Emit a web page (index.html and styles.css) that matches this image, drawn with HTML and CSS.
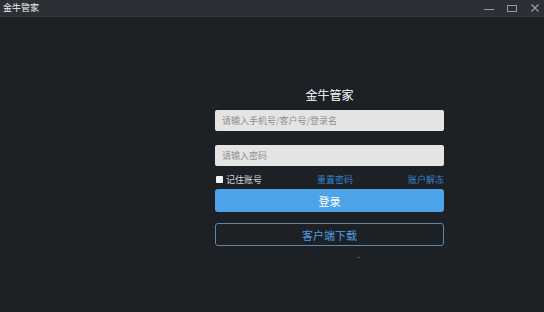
FILE: index.html
```html
<!DOCTYPE html>
<html lang="zh-CN">
<head>
  <meta charset="UTF-8" />
  <title>金牛管家</title>
  <link rel="stylesheet" href="styles.css">
</head>
<body>
  <div class="title-bar">
    <div class="app-name">金牛管家</div>
    <div class="win-btns">
      <svg class="win-btn" width="12" height="12" viewBox="0 0 12 12"><path d="M1 7.5h10" stroke="#9a9ca1" stroke-width="1"/></svg>
      <svg class="win-btn" width="12" height="12" viewBox="0 0 12 12"><rect x="1.5" y="3.5" width="9" height="6" fill="none" stroke="#9a9ca1" stroke-width="1"/></svg>
      <svg class="win-btn" width="12" height="12" viewBox="0 0 12 12"><path d="M2.5 2.5l7 7M9.5 2.5l-7 7" stroke="#9a9ca1" stroke-width="1.2"/></svg>
    </div>
  </div>

  <main>
    <div class="login-box">
      <h1>金牛管家</h1>
      <input class="field" type="text" placeholder="请输入手机号/客户号/登录名">
      <input class="field pwd" type="password" placeholder="请输入密码">
      <div class="options">
        <label class="remember"><span class="check"></span>记住账号</label>
        <a href="#" class="link">重置密码</a>
        <a href="#" class="link">账户解冻</a>
      </div>
      <button class="login-btn">登录</button>
      <button class="download-btn">客户端下载</button>
      <div class="dot"></div>
    </div>
  </main>
</body>
</html>
```

FILE: styles.css
```css
* { box-sizing: border-box; }

body {
  margin: 0;
  width: 544px;
  height: 312px;
  background: #1d2024;
  font-family: "Noto Sans CJK SC", "Noto Sans", sans-serif;
  color: #fff;
  overflow: hidden;
}

.title-bar {
  height: 17px;
  background: #2c2f36;
  border-bottom: 1px solid #34373e;
  display: flex;
  justify-content: space-between;
  align-items: center;
  padding: 0 3px 0 3px;
}

.app-name {
  font-size: 9px;
  line-height: 16px;
  color: #eee;
}

.win-btns {
  display: flex;
  gap: 11px;
}

.win-btn { display: block; }

main {
  padding: 70px 0 0 215px;
}

.login-box {
  width: 229px;
  display: flex;
  flex-direction: column;
}

h1 {
  margin: 0 0 7px;
  font-size: 12px;
  font-weight: normal;
  line-height: 16px;
  text-align: center;
  color: #fff;
}

.field {
  height: 21px;
  border: none;
  border-radius: 2px;
  background: #e4e4e4;
  padding: 0 7px;
  font-family: inherit;
  font-size: 9px;
  color: #333;
  outline: none;
}

.field::placeholder { color: #8f8f8f; }

.pwd { margin-top: 14px; }

.options {
  display: grid;
  grid-template-columns: 102px 1fr auto;
  align-items: center;
  height: 14px;
  margin-top: 6px;
  font-size: 9px;
}

.remember {
  display: flex;
  align-items: center;
  gap: 3px;
  color: #d6d6d6;
  padding-left: 1px;
}

.check {
  width: 7px;
  height: 7px;
  background: #f2f2f2;
  border-radius: 1px;
}

.link {
  color: #3383cc;
  text-decoration: none;
}

.login-btn,
.download-btn {
  height: 23px;
  border-radius: 3px;
  font-family: inherit;
  font-size: 11px;
  cursor: pointer;
}

.login-btn {
  margin-top: 3px;
  background: #4ea4e9;
  border: none;
  color: #fff;
}

.download-btn {
  margin-top: 11px;
  background: transparent;
  border: 1px solid #5e88ab;
  color: #4a9de2;
}

.dot {
  width: 3px;
  height: 1px;
  background: #4a5058;
  margin: 11px 0 0 142px;
}
```
